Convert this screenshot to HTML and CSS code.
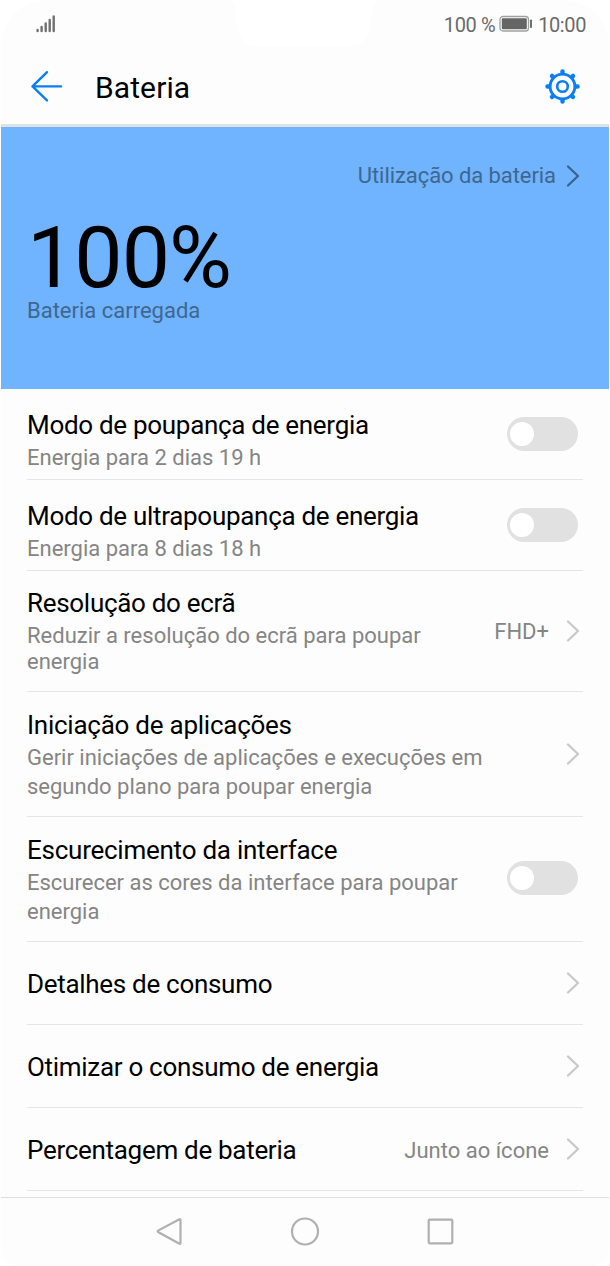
FILE: index.html
```html
<!DOCTYPE html>
<html lang="pt">
<head>
<meta charset="utf-8">
<title>Bateria</title>
<link rel="stylesheet" href="styles.css">
</head>
<body>
<main class="phone">
  <svg class="notch" width="148" height="47" viewBox="0 0 148 47"><path d="M0 0C5 4 5 10 5 18C6 34 12 46.500 28 46.500H118C134 46.500 140 32 140.500 18C141 10 142 4 148 0Z" fill="#fff"/></svg>
  <div class="status">
    <svg class="signal" width="20" height="18" viewBox="0 0 20 18"><path d="M1.600 15v1M5.600 12v4M9.700 8.500v7.500M13.700 5v11M17.700 1.500v14.500" stroke="#707070" stroke-width="2.400" stroke-linecap="round"/></svg>
    <div class="status-right">
      <span class="status-level">100 %</span>
      <svg class="battery" width="34" height="18" viewBox="0 0 34 18"><rect x="1" y="1.500" width="28.500" height="14.500" rx="3" fill="#fff" stroke="#a0a0a0" stroke-width="1.300"/><rect x="2.800" y="3.200" width="25" height="11" rx="1" fill="#656565"/><rect x="31" y="4.500" width="2" height="8.500" rx=".8" fill="#707070"/></svg>
      <span class="status-time">10:00</span>
    </div>
  </div>
  <header class="header">
    <svg class="back" width="34" height="34" viewBox="0 0 34 34"><path d="M31 17.400H2.500M17 3.200L2.500 17.400L17 31.400" fill="none" stroke="#0a7ff5" stroke-width="2.400" stroke-linecap="round" stroke-linejoin="round"/></svg>
    <h1 class="heading">Bateria</h1>
    <svg class="gear" width="36" height="36" viewBox="-18.500 -18.500 36 36" fill="none" stroke="#0a7ff5"><circle r="12.400" stroke-width="2.900"/><circle r="5.300" stroke-width="2.600"/><path d="M0-14.200V-15M0 14.200V15M-14.200 0H-15M14.200 0H15M-9.900-9.900L-10.500-10.500M9.900-9.900L10.500-10.500M-9.900 9.900L-10.500 10.500M9.900 9.900L10.500 10.500" stroke-width="4.500" stroke-linecap="round"/></svg>
  </header>
  <section class="hero">
    <div class="usage"><span>Utilização da bateria</span><svg class="chevron" width="16" height="24" viewBox="0 0 16 24"><path d="M3 2.500L13 12L3 21.500"/></svg></div>
    <div class="level">100%</div>
    <div class="charged">Bateria carregada</div>
  </section>
  <section class="list">
    <div class="row row-mode"><div class="copy"><div class="title">Modo de poupança de energia</div><div class="sub">Energia para 2 dias 19 h</div></div><span class="toggle"></span></div>
    <div class="row row-mode"><div class="copy"><div class="title">Modo de ultrapoupança de energia</div><div class="sub">Energia para 8 dias 18 h</div></div><span class="toggle"></span></div>
    <div class="row row-resolution"><div class="copy"><div class="title">Resolução do ecrã</div><div class="sub sub-tight">Reduzir a resolução do ecrã para poupar<br>energia</div></div><span class="value">FHD+</span><svg class="chevron" width="16" height="24" viewBox="0 0 16 24"><path d="M3 2.500L13 12L3 21.500"/></svg></div>
    <div class="row row-launch"><div class="copy"><div class="title">Iniciação de aplicações</div><div class="sub">Gerir iniciações de aplicações e execuções em<br>segundo plano para poupar energia</div></div><svg class="chevron" width="16" height="24" viewBox="0 0 16 24"><path d="M3 2.500L13 12L3 21.500"/></svg></div>
    <div class="row row-dark"><div class="copy"><div class="title">Escurecimento da interface</div><div class="sub">Escurecer as cores da interface para poupar<br>energia</div></div><span class="toggle"></span></div>
    <div class="row row-single"><div class="copy"><div class="title">Detalhes de consumo</div></div><svg class="chevron" width="16" height="24" viewBox="0 0 16 24"><path d="M3 2.500L13 12L3 21.500"/></svg></div>
    <div class="row row-single"><div class="copy"><div class="title">Otimizar o consumo de energia</div></div><svg class="chevron" width="16" height="24" viewBox="0 0 16 24"><path d="M3 2.500L13 12L3 21.500"/></svg></div>
    <div class="row row-single"><div class="copy"><div class="title">Percentagem de bateria</div></div><span class="value">Junto ao ícone</span><svg class="chevron" width="16" height="24" viewBox="0 0 16 24"><path d="M3 2.500L13 12L3 21.500"/></svg></div>
  </section>
  <nav class="nav">
    <svg width="28" height="30" viewBox="0 0 28 30"><path d="M24 2.500Q25.500 1.600 25.500 3.200V25.800Q25.500 27.400 24 26.500L3.500 15.200Q2 14.300 3.500 13.400Z"/></svg>
    <svg width="30" height="30" viewBox="0 0 30 30"><circle cx="15" cy="14.500" r="13"/></svg>
    <svg width="28" height="28" viewBox="0 0 28 28"><rect x="1.700" y="1.700" width="23.600" height="23.600" rx="1"/></svg>
  </nav>
</main>
</body>
</html>
```
FILE: styles.css
```css
* { box-sizing: border-box; }
body { margin: 0; background: #fff; font-family: Roboto, sans-serif; color: #000; }
.phone { position: relative; width: 608px; height: 1266px; margin-left: 1px; background: #fdfdfd; border-radius: 46px 46px 16px 16px; overflow: hidden; }
svg { display: block; flex: none; }
.notch { position: absolute; left: 230px; top: 0; }
.status { height: 49px; display: flex; justify-content: space-between; padding: 0 23px 0 35px; }
.signal { margin-top: 15px; }
.status-right { display: flex; height: 49px; align-items: center; font-size: 20px; letter-spacing: -.4px; color: #6a6a6a; white-space: nowrap; }
.battery { margin: 0 5px 1px 4px; }
.header { height: 78px; display: flex; align-items: center; padding: 0 29px 1px 29px; border-bottom: 3px solid #dfe2e5; }
.heading { flex: 1; margin: 3px 0 0 31px; font-size: 30px; font-weight: 400; line-height: 36px; letter-spacing: .1px; }
.hero { height: 262px; background: #70b3ff; padding: 35px 28px 0 26px; color: #3e6790; font-size: 22px; line-height: 28px; }
.usage { display: flex; justify-content: flex-end; align-items: center; height: 28px; letter-spacing: -.07px; }
.usage .chevron { margin-left: 9px; stroke: #3a638c; }
.level { margin-top: 28px; font-size: 86px; line-height: 80px; letter-spacing: -1px; color: #000; }
.charged { margin-top: -1px; }
.chevron { fill: none; stroke: #c9c9c9; stroke-width: 2.3; stroke-linecap: round; stroke-linejoin: round; }
.list { padding: 0 26px; }
.row { display: flex; align-items: center; border-bottom: 1px solid #e5e5e5; padding-right: 2px; }
.copy { flex: 1; align-self: flex-start; white-space: nowrap; }
.title { font-size: 26px; line-height: 32px; letter-spacing: -.3px; }
.row-launch .title, .row-dark .title { letter-spacing: -.25px; }
.sub { font-size: 22px; line-height: 29px; margin-top: 2px; color: #858585; }
.sub-tight { line-height: 26px; margin-top: 4px; }
.value { font-size: 22px; color: #858585; margin-right: 16px; white-space: nowrap; }
.toggle { width: 71px; height: 34px; margin-right: 3px; padding: 5px 3px; border-radius: 17px; background: #e1e1e1; }
.toggle::before { content: ""; display: block; width: 24px; height: 24px; border-radius: 50%; background: #fff; }
.row-mode { height: 91px; padding-top: 20px; }
.row-mode .toggle { margin-top: -21px; }
.row-resolution { height: 121px; padding-top: 16px; }
.row-resolution .chevron { margin-top: -17px; }
.row-resolution .value { margin-top: -15px; }
.row-launch { height: 125px; padding-top: 17px; }
.row-launch .chevron { margin-top: -18px; }
.row-dark { height: 125px; padding-top: 17px; }
.row-dark .toggle { margin-top: -19px; }
.row-single { height: 83px; padding-top: 26px; }
.row-single .value { margin-top: -24px; }
.row-single .chevron { margin-top: -27px; }
.nav { height: 69px; margin-top: 6px; border-top: 1px solid #dedede; display: flex; justify-content: center; align-items: center; gap: 107px; fill: none; stroke: #b0b0b0; stroke-width: 2.2; }
```
